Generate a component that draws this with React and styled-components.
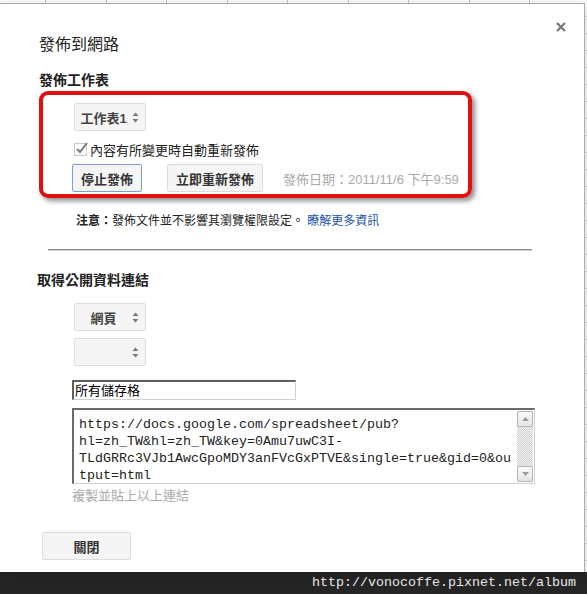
import React from 'react';
import styled, { createGlobalStyle } from 'styled-components';

const SANS = `"Liberation Sans", Arial, "Noto Sans CJK TC", sans-serif`;
const MONO = `"Liberation Mono", "Courier New", monospace`;

const Global = createGlobalStyle`
  html, body { margin: 0; padding: 0; background: #fff; }
  body { width: 587px; height: 594px; overflow: hidden; }
`;

const Page = styled.div`
  width: 587px;
  height: 594px;
  overflow: hidden;
  display: flex;
  flex-direction: column;
  font-family: ${SANS};
  background-color: #fff;
  background-image:
    repeating-linear-gradient(90deg, transparent 0 45px, #c8c8c8 45px 46px, transparent 46px 60.5px),
    repeating-linear-gradient(180deg, transparent 0 16px, #d8d8d8 16px 17px);
`;

const Dialog = styled.div`
  position: relative;
  flex: none;
  margin-top: 3px;
  width: 585px;
  height: 569px;
  box-sizing: border-box;
  background: #fff;
  border-top: 1px solid #acacac;
  border-right: 1px solid #acacac;
  box-shadow: 0 4px 16px rgba(0, 0, 0, 0.2);
  padding: 31px 0 0 39px;
  display: flex;
  flex-direction: column;
  align-items: flex-start;
`;

const CloseX = styled.button`
  position: absolute;
  top: 18px;
  right: 18px;
  width: 10px;
  height: 10px;
  padding: 0;
  border: 0;
  background: none;
  display: flex;
`;

const Title = styled.h1`
  margin: 0;
  font-size: 16px;
  line-height: 20px;
  font-weight: normal;
  color: #222;
`;

const Heading = styled.h2`
  margin: ${p => p.$top}px 0 0 ${p => p.$left || 0}px;
  font-size: 14px;
  line-height: 18px;
  font-weight: bold;
  color: #222;
`;

const RedBox = styled.div`
  margin-top: 2px;
  width: 433px;
  box-sizing: border-box;
  border: 4px solid #e01010;
  border-radius: 9px;
  box-shadow: 3px 3px 5px rgba(0, 0, 0, 0.45);
  padding: 8px 0 2px 31px;
  display: flex;
  flex-direction: column;
  align-items: flex-start;
`;

const Select = styled.div`
  margin: ${p => p.$top || 0}px 0 0 ${p => p.$left || 0}px;
  width: 72px;
  height: 28px;
  box-sizing: border-box;
  background: #f5f5f5;
  border: 1px solid #dcdcdc;
  border-radius: 2px;
  display: flex;
  align-items: center;
  font-size: 13px;
  font-weight: bold;
  color: #444;
`;

const SelectLabel = styled.span`
  flex: 1;
  text-align: center;
  white-space: nowrap;
`;

const Arrows = styled.svg`
  flex: none;
  margin-right: 6px;
`;

const CheckRow = styled.label`
  margin-top: 9px;
  height: 18px;
  display: flex;
  align-items: center;
  gap: 3px;
  font-size: 13px;
  color: #222;
`;

const CheckBox = styled.span`
  position: relative;
  width: 11px;
  height: 11px;
  border: 1px solid #c8c8c8;
  background: #fff;
  svg { position: absolute; left: 0; top: -3px; }
`;

const ButtonRow = styled.div`
  margin-top: 6px;
  display: flex;
  align-items: center;
`;

const Button = styled.button`
  height: 28px;
  margin-left: ${p => p.$left || 0}px;
  margin-top: ${p => p.$top || 0}px;
  min-width: ${p => p.$minW || 0}px;
  padding: 0 8px;
  box-sizing: border-box;
  background: #f5f5f5;
  border: 1px solid ${p => (p.$focus ? '#7a9fd4' : '#dcdcdc')};
  border-radius: 2px;
  font-family: ${SANS};
  font-size: 13px;
  font-weight: bold;
  color: #333;
`;

const DateText = styled.span`
  margin-left: 20px;
  font-size: 13px;
  color: #aaa;
  white-space: nowrap;
`;

const Note = styled.p`
  margin: 14px 0 0 37px;
  font-size: 12px;
  line-height: 18px;
  color: #222;
  b { font-weight: bold; }
  a { color: #1a55a8; text-decoration: none; }
`;

const Rule = styled.hr`
  margin: 19px 0 0 9px;
  width: 484px;
  height: 0;
  border: 0;
  border-top: 1px solid #8c8c8c;
  border-bottom: 1px solid #d0d0d0;
`;

const LinkSection = styled.div`
  padding-left: 33px;
  display: flex;
  flex-direction: column;
  align-items: flex-start;
`;

const TextInput = styled.div`
  margin-top: 14px;
  width: 224px;
  height: 20px;
  box-sizing: border-box;
  border-top: 2px solid #5f5f5f;
  border-left: 2px solid #5f5f5f;
  border-right: 1px solid #cfcfcf;
  border-bottom: 1px solid #cfcfcf;
  padding-left: 1px;
  font-size: 13px;
  line-height: 17px;
  color: #000;
`;

const TextArea = styled.div`
  margin-top: 8px;
  width: 463px;
  height: 76px;
  box-sizing: border-box;
  border-top: 2px solid #6a6a6a;
  border-left: 2px solid #6a6a6a;
  border-right: 1px solid #cfcfcf;
  border-bottom: 1px solid #cfcfcf;
  display: flex;
`;

const TextBody = styled.div`
  flex: 1;
  padding: 6px 0 0 5px;
  font-family: ${MONO};
  font-size: 13.33px;
  line-height: 17px;
  white-space: pre;
  color: #222;
  overflow: hidden;
`;

const Scrollbar = styled.div`
  flex: none;
  width: 16px;
  margin: 1px 1px 1px 0;
  display: flex;
  flex-direction: column;
  background-color: #f2f2f2;
  background-image: repeating-conic-gradient(#d0d0d0 0 25%, #f4f4f4 0 50%);
  background-size: 2px 2px;
`;

const ScrollBtn = styled.div`
  height: 16px;
  box-sizing: border-box;
  border: 1px solid #b4b4b4;
  border-radius: 2px;
  background: linear-gradient(#fafafa, #e4e4e4);
  display: flex;
  align-items: center;
  justify-content: center;
  margin-top: ${p => (p.$bottom ? 'auto' : '0')};
`;

const Hint = styled.div`
  margin-top: 4px;
  font-size: 13px;
  line-height: 16px;
  color: #aaa;
`;

const Watermark = styled.div`
  flex: none;
  height: 22px;
  background: #262626;
  color: #f2f2f2;
  font-family: ${MONO};
  font-size: 13.33px;
  line-height: 22px;
  text-align: right;
  padding-right: 11px;
`;

const SelectArrows = () => (
  <Arrows width="7" height="11" viewBox="0 0 7 11">
    <path d="M3.5 0.5 L6.5 4 L0.5 4 Z" fill="#777" />
    <path d="M3.5 10.5 L6.5 7 L0.5 7 Z" fill="#777" />
  </Arrows>
);

const URL_LINES = [
  'https://docs.google.com/spreadsheet/pub?',
  'hl=zh_TW&hl=zh_TW&key=0Amu7uwC3I-',
  'TLdGRRc3VJb1AwcGpoMDY3anFVcGxPTVE&single=true&gid=0&ou',
  'tput=html',
];

export default function App() {
  return (
    <>
      <Global />
      <Page>
        <Dialog>
          <CloseX aria-label="關閉">
            <svg width="10" height="10" viewBox="0 0 10 10">
              <path d="M1 1 L9 9 M9 1 L1 9" stroke="#777" strokeWidth="2.2" />
            </svg>
          </CloseX>
          <Title>發佈到網路</Title>
          <Heading $top={16}>發佈工作表</Heading>
          <RedBox>
            <Select>
              <SelectLabel>工作表1</SelectLabel>
              <SelectArrows />
            </Select>
            <CheckRow>
              <CheckBox>
                <svg width="14" height="14" viewBox="0 0 14 14">
                  <path d="M2 8 L5 11 L12 2" stroke="#7a7a7a" strokeWidth="2" fill="none" />
                </svg>
              </CheckBox>
              內容有所變更時自動重新發佈
            </CheckRow>
            <ButtonRow>
              <Button $focus $left={-2}>停止發佈</Button>
              <Button $left={25}>立即重新發佈</Button>
              <DateText>發佈日期：2011/11/6 下午9:59</DateText>
            </ButtonRow>
          </RedBox>
          <Note>
            <b>注意：</b>發佈文件並不影響其瀏覽權限設定。 <a href="#">瞭解更多資訊</a>
          </Note>
          <Rule />
          <Heading $top={20} $left={-2}>取得公開資料連結</Heading>
          <LinkSection>
            <Select $top={14} $left={2}>
              <SelectLabel>網頁</SelectLabel>
              <SelectArrows />
            </Select>
            <Select $top={7} $left={2}>
              <SelectLabel />
              <SelectArrows />
            </Select>
            <TextInput>所有儲存格</TextInput>
            <TextArea>
              <TextBody>{URL_LINES.join('\n')}</TextBody>
              <Scrollbar>
                <ScrollBtn>
                  <svg width="7" height="4" viewBox="0 0 7 4"><path d="M3.5 0 L7 4 L0 4 Z" fill="#9a9a9a" /></svg>
                </ScrollBtn>
                <ScrollBtn $bottom>
                  <svg width="7" height="4" viewBox="0 0 7 4"><path d="M3.5 4 L7 0 L0 0 Z" fill="#9a9a9a" /></svg>
                </ScrollBtn>
              </Scrollbar>
            </TextArea>
            <Hint>複製並貼上以上連結</Hint>
          </LinkSection>
          <Button $top={28} $left={3} $minW={89}>關閉</Button>
        </Dialog>
        <Watermark>http://vonocoffe.pixnet.net/album</Watermark>
      </Page>
    </>
  );
}
